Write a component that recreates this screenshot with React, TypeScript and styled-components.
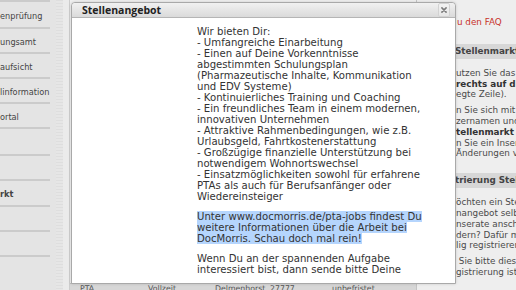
import styled, { createGlobalStyle } from "styled-components";

const GlobalStyle = createGlobalStyle`
    html, body {
        margin: 0;
        padding: 0;
        background: #e4e4e4;
    }
    body {
        font-family: "DejaVu Sans", Verdana, sans-serif;
        color: #333;
    }
`;

const Page = styled.div`
    position: relative;
    display: flex;
    width: 516px;
    height: 290px;
    overflow: hidden;
    background: #e4e4e4;
`;

const Sidebar = styled.ul`
    width: 50px;
    margin: 0;
    padding: 0 6px 0 0;
    list-style: none;
    background: #e4e4e4;
`;

const MenuItem = styled.li<{ $h?: number; $bold?: boolean }>`
    height: ${({ $h }) => $h ?? 25}px;
    border-top: 2px solid #cbcbcb;
    box-sizing: border-box;
    display: flex;
    align-items: center;
    padding-top: 2px;
    font-size: 8.2px;
    font-weight: ${({ $bold }) => ($bold ? "bold" : "normal")};
    color: #444;
    white-space: nowrap;
    overflow: hidden;
`;

const DottedStrip = styled.div`
    width: 7px;
    background: repeating-linear-gradient(
        to bottom,
        #dedede 0px,
        #dedede 1px,
        #e6e6e6 1px,
        #e6e6e6 3px
    );
`;

const Gutter = styled.div`
    width: 6px;
    background: #ebebeb;
    border-right: 1px solid #cdcdcd;
`;

const Main = styled.div`
    width: 346px;
    display: flex;
    flex-direction: column;
    background: #efefef;
    border-right: 1px solid #c4c4c4;
`;

const MainFill = styled.div`
    height: 283px;
    flex: none;
`;

const TableRow = styled.div`
    display: grid;
    grid-template-columns: 68px 67px 55px 62px 1fr;
    height: 18px;
    padding-left: 10px;
    border-top: 1px solid #bdbdbd;
    background: #d7d7d7;
    font-size: 7.8px;
    line-height: 9px;
    color: #555;
    white-space: nowrap;
`;

const RightCol = styled.div`
    flex: 1;
    background: #eeeeee;
    padding-top: 17px;
    font-size: 8.8px;
    line-height: 10.8px;
    color: #4a4a4a;
    white-space: nowrap;
    overflow: hidden;
`;

const FaqLink = styled.a`
    display: block;
    padding-left: 40px;
    color: #c8312c;
    text-decoration: none;
    margin-bottom: 16px;
`;

const BoxHead = styled.div<{ $gap?: number }>`
    height: 15px;
    line-height: 15px;
    margin-top: ${({ $gap }) => $gap ?? 0}px;
    padding-left: 38px;
    background: #d7d7d7;
    font-weight: bold;
    color: #444;
    margin-bottom: 9px;
`;

const BoxText = styled.p`
    margin: 0 0 5px;
    padding-left: 39px;
    b {
        color: #333;
    }
`;

const Dialog = styled.div`
    position: absolute;
    left: 71px;
    top: 2px;
    width: 383px;
    height: 280px;
    background: #fff;
    border: 1px solid #a9a9a9;
    border-radius: 4px 4px 0 0;
    box-shadow: 0 0 3px rgba(0, 0, 0, 0.15);
    display: flex;
    flex-direction: column;
    overflow: hidden;
`;

const TitleBar = styled.div`
    display: flex;
    align-items: center;
    justify-content: space-between;
    height: 20px;
    padding: 0 5px 0 10px;
    border-bottom: 1px solid #b5b5b5;
    border-radius: 3px 3px 0 0;
    background: linear-gradient(to bottom, #f1f1f1, #dadada);
`;

const Title = styled.span`
    font-family: "Open Sans", "DejaVu Sans", sans-serif;
    font-size: 10.5px;
    font-weight: bold;
    color: #222;
`;

const CloseBtn = styled.button`
    width: 12px;
    height: 14px;
    padding: 0;
    display: flex;
    align-items: center;
    justify-content: center;
    background: linear-gradient(to bottom, #f2f2f2, #e6e6e6);
    border: 1px solid #d2d2d2;
    border-radius: 2px;
    svg {
        width: 6px;
        height: 6px;
    }
`;

const DialogBody = styled.div`
    flex: 1;
    padding: 7.5px 0 0 125px;
    font-size: 10.15px;
    line-height: 11px;
    color: #333;
    white-space: nowrap;
`;

const Para = styled.p`
    margin: 0 0 9px;
`;

const Marked = styled.span`
    background: #b5d5fd;
`;

const offerLines = [
    "Wir bieten Dir:",
    "- Umfangreiche Einarbeitung",
    "- Einen auf Deine Vorkenntnisse",
    "abgestimmten Schulungsplan",
    "(Pharmazeutische Inhalte, Kommunikation",
    "und EDV Systeme)",
    "- Kontinuierliches Training und Coaching",
    "- Ein freundliches Team in einem modernen,",
    "innovativen Unternehmen",
    "- Attraktive Rahmenbedingungen, wie z.B.",
    "Urlaubsgeld, Fahrtkostenerstattung",
    "- Großzügige finanzielle Unterstützung bei",
    "notwendigem Wohnortswechsel",
    "- Einsatzmöglichkeiten sowohl für erfahrene",
    "PTAs als auch für Berufsanfänger oder",
    "Wiedereinsteiger",
];

const linkLines = [
    "Unter www.docmorris.de/pta-jobs findest Du",
    "weitere Informationen über die Arbeit bei",
    "DocMorris. Schau doch mal rein!",
];

const applyLines = [
    "Wenn Du an der spannenden Aufgabe",
    "interessiert bist, dann sende bitte Deine",
];

const menu = [
    { label: "enprüfung", h: 27 },
    { label: "ungsamt" },
    { label: "aufsicht" },
    { label: "linformation" },
    { label: "ortal" },
    { label: "", h: 27 },
    { label: "" },
    { label: "rkt", h: 26, bold: true },
    { label: "" },
    { label: "" },
    { label: "" },
];

function withBreaks(lines: string[]) {
    return lines.map((l, i) => (
        <span key={i}>
            {l}
            {i < lines.length - 1 && <br />}
        </span>
    ));
}

function App() {
    return (
        <>
            <GlobalStyle />
            <Page>
                <Sidebar>
                    {menu.map((m, i) => (
                        <MenuItem key={i} $h={m.h} $bold={m.bold}>
                            {m.label}
                        </MenuItem>
                    ))}
                </Sidebar>
                <DottedStrip />
                <Gutter />
                <Main>
                    <MainFill />
                    <TableRow>
                        <span>PTA</span>
                        <span>Vollzeit</span>
                        <span>Delmenhorst</span>
                        <span>27777</span>
                        <span>unbefristet</span>
                    </TableRow>
                </Main>
                <RightCol>
                    <FaqLink href="#">u den FAQ</FaqLink>
                    <BoxHead>Stellenmarkt</BoxHead>
                    <BoxText>
                        utzen Sie das<br />
                        <b>rechts auf die</b><br />
                        egte Zeile).
                    </BoxText>
                    <BoxText>
                        n Sie sich mit Ihrem<br />
                        zernamen und<br />
                        <b>tellenmarkt</b> an<br />
                        n Sie ein Inserat<br />
                        Änderungen vor
                    </BoxText>
                    <BoxHead $gap={14}>trierung Stellen</BoxHead>
                    <BoxText>
                        öchten ein Stellen<br />
                        nangebot selbst<br />
                        nserate anschließend<br />
                        dern? Dafür müssen<br />
                        lig registrieren
                    </BoxText>
                    <BoxText>
                        &nbsp;Sie bitte diese<br />
                        gistrierung ist
                    </BoxText>
                </RightCol>

                <Dialog>
                    <TitleBar>
                        <Title>Stellenangebot</Title>
                        <CloseBtn type="button" aria-label="schließen">
                            <svg viewBox="0 0 10 10">
                                <path
                                    d="M1.5 1.5 L8.5 8.5 M8.5 1.5 L1.5 8.5"
                                    stroke="#7a7a7a"
                                    strokeWidth="2.6"
                                    strokeLinecap="round"
                                />
                            </svg>
                        </CloseBtn>
                    </TitleBar>
                    <DialogBody>
                        <Para>{withBreaks(offerLines)}</Para>
                        <Para>
                            <Marked>{withBreaks(linkLines)}</Marked>
                        </Para>
                        <Para>{withBreaks(applyLines)}</Para>
                    </DialogBody>
                </Dialog>
            </Page>
        </>
    );
}

export default App;
